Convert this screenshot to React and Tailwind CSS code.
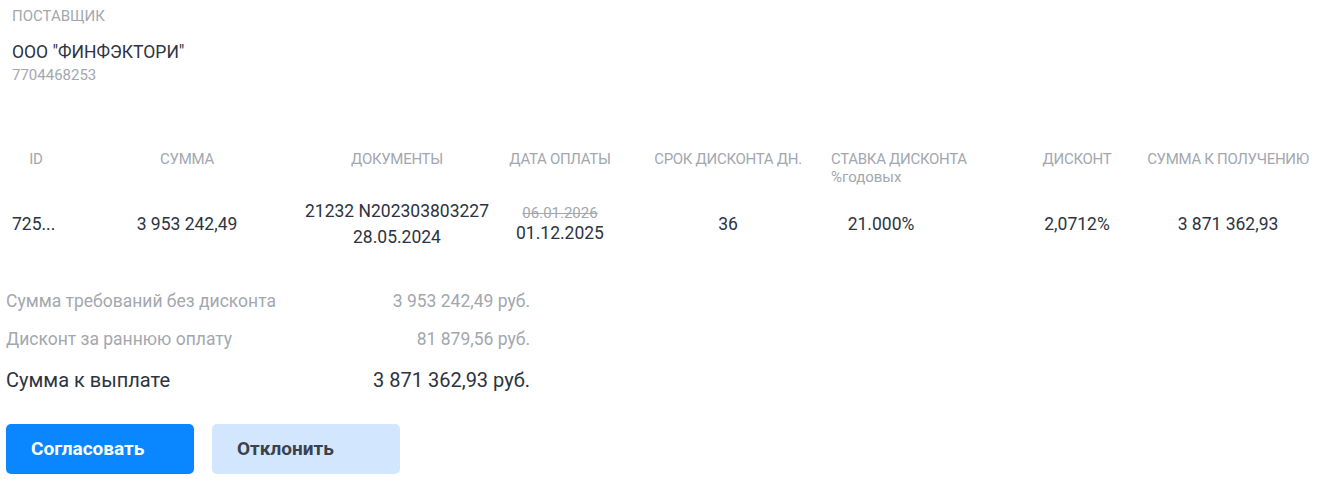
import React from "react";

const cols = [
  { title: "ID", w: "w-[48px]" },
  { title: "СУММА", w: "w-[254px]" },
  { title: "ДОКУМЕНТЫ", w: "w-[166px]" },
  { title: "ДАТА ОПЛАТЫ", w: "w-[160px]" },
  { title: "СРОК ДИСКОНТА ДН.", w: "w-[176px]" },
  { title: "СТАВКА ДИСКОНТА", w: "w-[130px]", sub: "%годовых" },
  { title: "ДИСКОНТ", w: "w-[262px]" },
  { title: "СУММА К ПОЛУЧЕНИЮ", w: "w-[40px]" },
];

function App() {
  return (
    <div className="font-['Roboto',sans-serif] text-[#2d3340] bg-white min-h-[501px]">
      {/* supplier */}
      <div className="px-3 pt-[7px]">
        <div className="text-[15px] leading-[18px] text-[#a3a7ae]">ПОСТАВЩИК</div>
        <div className="mt-[16px] text-[17.5px] leading-[22px]">ООО "ФИНФЭКТОРИ"</div>
        <div className="mt-[3px] text-[15px] leading-[18px] text-[#a3a7ae]">7704468253</div>
      </div>

      {/* table header */}
      <div className="mt-[66px] pl-3 flex items-start text-[15px] tracking-[-0.02em] text-[#a3a7ae]">
        {cols.map((c) =>
          c.sub ? (
            <div key={c.title} className={`${c.w} shrink-0 flex flex-col pl-[15px] whitespace-nowrap`}>
              <span className="leading-[18px]">{c.title}</span>
              <span className="leading-[18px] tracking-normal">{c.sub}</span>
            </div>
          ) : (
            <div key={c.title} className={`${c.w} shrink-0 flex justify-center whitespace-nowrap`}>
              <span className="leading-[18px]">{c.title}</span>
            </div>
          )
        )}
      </div>

      {/* table row */}
      <div className="mt-[12px] pl-3 flex items-center text-[17.5px] whitespace-nowrap">
        <div className="w-[48px] shrink-0 flex justify-start">725...</div>
        <div className="w-[254px] shrink-0 flex justify-center">3 953 242,49</div>
        <div className="w-[166px] shrink-0 flex flex-col items-center leading-[26px]">
          <span>21232 N202303803227</span>
          <span>28.05.2024</span>
        </div>
        <div className="w-[160px] shrink-0 flex flex-col items-center">
          <span className="text-[15px] leading-[18px] text-[#a3a7ae] line-through">06.01.2026</span>
          <span className="leading-[22px]">01.12.2025</span>
        </div>
        <div className="w-[176px] shrink-0 flex justify-center">36</div>
        <div className="w-[130px] shrink-0 flex justify-center">21.000%</div>
        <div className="w-[262px] shrink-0 flex justify-center">2,0712%</div>
        <div className="w-[40px] shrink-0 flex justify-center">3 871 362,93</div>
      </div>

      {/* totals */}
      <div className="mt-[39px] ml-[6px] w-[524px] flex flex-col">
        <div className="flex justify-between text-[17.5px] leading-6 text-[#a3a7ae]">
          <span>Сумма требований без дисконта</span>
          <span>3 953 242,49 руб.</span>
        </div>
        <div className="mt-[14px] flex justify-between text-[17.5px] leading-6 text-[#a3a7ae]">
          <span>Дисконт за раннюю оплату</span>
          <span>81 879,56 руб.</span>
        </div>
        <div className="mt-[16px] flex justify-between text-[20px] leading-[26px] text-[#2d3340]">
          <span>Сумма к выплате</span>
          <span>3 871 362,93 руб.</span>
        </div>
      </div>

      {/* actions */}
      <div className="mt-[31px] ml-[6px] flex gap-[18px]">
        <button className="w-[188px] h-[50px] rounded-[5px] bg-[#0a87ff] text-white text-[19px] font-bold text-left pl-[25px]">
          Согласовать
        </button>
        <button className="w-[188px] h-[50px] rounded-[5px] bg-[#d2e7fd] text-[#3b414d] text-[19px] font-bold text-left pl-[25px]">
          Отклонить
        </button>
      </div>
    </div>
  );
}

export default App;
